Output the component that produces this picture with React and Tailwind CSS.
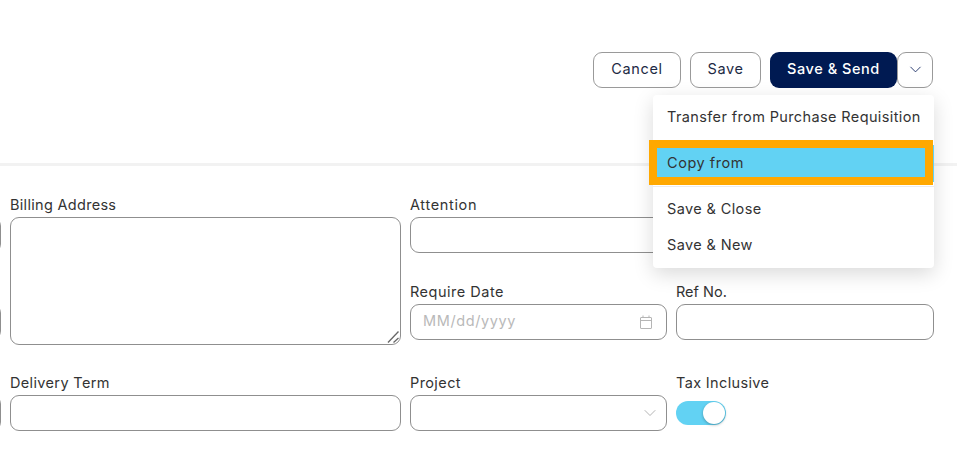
import React from "react";
import { ChevronDown } from "lucide-react";

const font = { fontFamily: "Inter, 'Liberation Sans', sans-serif" };

function Field({ label, track = "tracking-[0.35px]", children, className = "" }) {
  return (
    <div className={`flex flex-col ${className}`}>
      <label className={`h-[22px] text-[14.5px] leading-[20px] text-[#333333] whitespace-nowrap ${track}`}>{label}</label>
      {children}
    </div>
  );
}

const boxClass = "h-[36px] w-full rounded-[9px] border border-[#8f8f8f] bg-white";

function Stub() {
  return <div className={boxClass} />;
}

export default function App() {
  return (
    <div className="relative h-[469px] w-[957px] overflow-hidden bg-white" style={font}>
      <header className="flex h-[166px] items-start justify-end gap-[9px] border-b-[3px] border-[#f2f2f2] pr-[24px] pt-[52px] text-[14.5px]">
        <button className="h-[36px] w-[88px] rounded-[9px] border border-[#9a9a9a] bg-white pb-[3px] tracking-[0.65px] text-[#1d2a44]">Cancel</button>
        <button className="h-[36px] w-[71px] rounded-[9px] border border-[#9a9a9a] bg-white pb-[3px] tracking-[0.65px] text-[#1d2a44]">Save</button>
        <div className="flex">
          <button className="h-[36px] w-[127px] rounded-[9px] bg-[#001a52] pb-[3px] font-medium tracking-[0.55px] text-white">Save &amp; Send</button>
          <button className="flex h-[36px] w-[36px] items-center justify-center rounded-[9px] border border-[#9a9a9a] bg-white pb-[1px] text-[#1d2f66]">
            <ChevronDown size={19} strokeWidth={1.15} />
          </button>
        </div>
      </header>

      <main className="ml-[-257px] mt-[29px] grid w-[1214px] grid-cols-[258px_391px_257px_258px] gap-x-[9px]">
        <div className="row-start-1 pt-[22px]"><Stub /></div>
        <div className="row-start-2 pt-[22px]"><Stub /></div>
        <Field label="Billing Address" track="tracking-[0.3px]" className="col-start-2 row-span-2 row-start-1">
          <div className="relative">
            <textarea className="block h-[128px] w-full resize-none rounded-[9px] border border-[#8f8f8f] bg-white" />
            <svg className="absolute bottom-[1px] right-[1px]" width="14" height="14" viewBox="0 0 14 14" fill="none" stroke="#666666" strokeWidth="1.3">
              <path d="M2 12.5 L12.5 1.5" />
              <path d="M7.5 12.5 L12.5 8" />
            </svg>
          </div>
        </Field>
        <Field label="Attention" track="tracking-[0.65px]" className="col-start-3 row-start-1 h-[87px]">
          <div className={boxClass} />
        </Field>
        <div className="col-start-4 row-start-1" />
        <Field label="Require Date" track="tracking-[0.5px]" className="col-start-3 row-start-2 h-[91px]">
          <div className={`${boxClass} flex items-center justify-between pl-[12px] pr-[14px]`}>
            <span className="pb-[2px] text-[14.5px] tracking-[0.6px] text-[#b9b9b9]">MM/dd/yyyy</span>
            <svg width="12" height="14" viewBox="0 0 12 14" fill="none" stroke="#b5b5b5" strokeWidth="1">
              <rect x="0.5" y="2.5" width="11" height="11" rx="0.5" />
              <path d="M0.5 5.5 H11.5 M3 0.5 V3 M9 0.5 V3" />
            </svg>
          </div>
        </Field>
        <Field label="Ref No." track="tracking-[0px]" className="col-start-4 row-start-2">
          <div className={boxClass} />
        </Field>

        <div className="row-start-3 pt-[22px]"><Stub /></div>
        <Field label="Delivery Term" className="col-start-2 row-start-3">
          <div className={boxClass} />
        </Field>
        <Field label="Project" track="tracking-[0.4px]" className="col-start-3 row-start-3">
          <div className={`${boxClass} flex items-center justify-end pr-[6px]`}>
            <ChevronDown size={20} strokeWidth={0.9} className="text-[#9a9a9a]" />
          </div>
        </Field>
        <Field label="Tax Inclusive" className="col-start-4 row-start-3">
          <div className="relative mt-[6px] h-[24px] w-[50px] rounded-full bg-[#62d2f3]">
            <span className="absolute right-[1px] top-[1px] h-[22px] w-[22px] rounded-full bg-white shadow-[0_1px_3px_rgba(0,0,0,0.3)]" />
          </div>
        </Field>
      </main>

      <div className="absolute left-[653px] top-[95px] flex h-[173px] w-[281px] flex-col rounded-[4px] bg-white text-[14.5px] tracking-[0.38px] text-[#333333] shadow-[0_6px_20px_rgba(0,0,0,0.15)]">
        <div className="flex h-[45px] shrink-0 items-center whitespace-nowrap px-[14px] pb-[2px]">Transfer from Purchase Requisition</div>
        <div className="mt-[5px] flex h-[37px] shrink-0 items-center bg-[#62d2f3] px-[14px] pb-[2px] tracking-[0.55px]">Copy from</div>
        <div className="mt-[4px] h-px shrink-0 bg-[#ececec]" />
        <div className="mt-[5px] flex h-[36px] shrink-0 items-center px-[14px] pb-[2px]">Save &amp; Close</div>
        <div className="flex h-[36px] shrink-0 items-center px-[14px] pb-[2px]">Save &amp; New</div>
        <div className="absolute left-[-4px] top-[45px] h-[45px] w-[284px] border-[8px] border-[#ffa800]" />
      </div>
    </div>
  );
}
